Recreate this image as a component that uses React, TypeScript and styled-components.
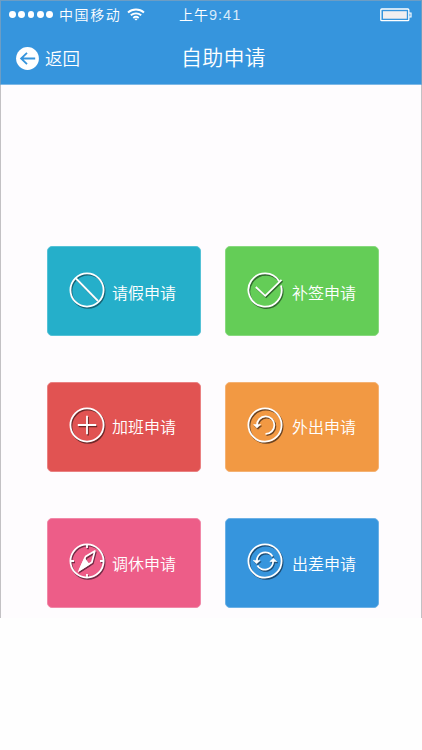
import React from 'react';
import styled, { createGlobalStyle } from 'styled-components';

const GlobalStyle = createGlobalStyle`
  * { box-sizing: border-box; }
  body {
    margin: 0;
    background: #fefefe;
    font-family: "Noto Sans CJK SC", sans-serif;
    font-weight: 350;
    color: #fff;
  }
`;

const Screen = styled.main`
  width: 422px;
  height: 618px;
  border: 1px solid #c3c1c4;
  border-top: 0;
  border-bottom: 0;
  background: #fefcfe;
`;

const Header = styled.header`
  height: 85px;
  margin: 0 -1px;
  background: #3695dd;
  border: 1px solid #6c9dc4;
  border-bottom-color: #7eb8e6;
`;

const StatusBar = styled.div`
  display: grid;
  grid-template-columns: 170px 1fr auto;
  align-items: center;
  height: 27px;
  padding: 0 9px 0 8px;
`;

const Carrier = styled.div`
  display: flex;
  align-items: center;
`;

const Dots = styled.div`
  display: flex;
  gap: 2.4px;
  margin-right: 6px;
`;

const Dot = styled.i`
  width: 6.9px;
  height: 6.9px;
  border-radius: 50%;
  background: #fff;
`;

const StatusText = styled.span<{ $spacing: number }>`
  margin-top: -1px;
  font-size: 14px;
  line-height: 20px;
  letter-spacing: ${(p) => p.$spacing}px;
  white-space: nowrap;
`;

const Digits = styled.span`
  font-family: "Liberation Sans", sans-serif;
  font-size: 14.5px;
  color: #d8ebfa;
`;

const Gap = styled.span`
  width: 6px;
`;

const NavBar = styled.div`
  display: grid;
  grid-template-columns: 165px 1fr;
  align-items: center;
  height: 56px;
  padding: 2px 0 0 15px;
`;

const BackButton = styled.button`
  display: flex;
  align-items: center;
  gap: 6px;
  padding: 2px 0 0;
  border: 0;
  background: none;
  color: inherit;
  font: inherit;
  font-size: 17.5px;
  line-height: 24px;
`;

const Title = styled.h1`
  margin: -2px 0 0;
  font-size: 21px;
  line-height: 30px;
  letter-spacing: 0.2px;
  font-weight: 350;
`;

const CardGrid = styled.div`
  display: grid;
  grid-template-columns: 154px 154px;
  grid-auto-rows: 90px;
  gap: 46px 24px;
  padding: 161px 0 0 46px;
`;

const Card = styled.button<{ $color: string; $edge: string; $top: number }>`
  display: flex;
  align-items: flex-start;
  padding: ${(p) => p.$top}px 0 0 19px;
  border: 1px solid ${(p) => p.$edge};
  border-radius: 5px;
  background: ${(p) => p.$color};
  color: #fff;
  font: inherit;
  text-align: left;
`;

const CardIcon = styled.svg`
  flex: none;
  width: 40px;
  height: 40px;
  fill: none;
  stroke-width: 1.8;
`;

const CardLabel = styled.span<{ $left: number; $top: number }>`
  margin: ${(p) => p.$top}px 0 0 ${(p) => p.$left}px;
  font-size: 16px;
  line-height: 24px;
  white-space: nowrap;
`;

type Kind = 'ban' | 'check' | 'plus' | 'undo' | 'compass' | 'sync';

const shapes: Record<Kind, React.ReactNode> = {
  ban: <path d="M9 8.5 31 31" />,
  check: <path d="m10.8 17 9.4 8.8L36.5 9.8" />,
  plus: <path d="M20 10.8v18.4M10.8 20h18.4" />,
  undo: (
    <>
      <path d="M12 20.5A8.7 8.7 0 1 1 20.5 28.8" />
      <path d="M8.6 19.6h7l-3.7 3.4Z" fill="currentColor" strokeWidth=".6" />
    </>
  ),
  compass: (
    <>
      <path d="M20 3v4M20 33v4M3 20h4M33 20h4" />
      <path d="M27.8 10 18.6 15.6 12.6 29 24.9 21.3Z" strokeWidth="1.7" strokeLinejoin="round" />
      <path d="M17.6 18 12.6 29 21.6 23.2Z" fill="currentColor" />
    </>
  ),
  sync: (
    <>
      <path d="M11.8 20A8.5 8.5 0 0 1 27.6 15.5M28.2 20A8.5 8.5 0 0 1 12.4 24.5" />
      <path d="M8.2 19.4h7l-3.6 3.3ZM31.8 20.6h-7l3.6-3.3Z" fill="currentColor" strokeWidth=".6" />
    </>
  ),
};

function EmbossedIcon({ kind, shade }: { kind: Kind; shade: string }) {
  const ring =
    kind === 'check' ? <path d="M34.2 11.4A16.6 16.6 0 1 0 36 15.5M34.2 11.4 32.2 8.8" /> : <circle cx="20" cy="20" r="16.6" />;
  return (
    <CardIcon viewBox="0 0 40 40">
      <g transform="translate(1 1.3)" stroke={shade} color={shade}>
        {ring}
        {shapes[kind]}
      </g>
      <g stroke="#fff" color="#fff">
        {ring}
        {shapes[kind]}
      </g>
    </CardIcon>
  );
}

interface Item {
  kind: Kind;
  label: string;
  color: string;
  edge: string;
  shade: string;
  iconTop: number;
  labelLeft: number;
  labelTop: number;
}

const items: Item[] = [
  { kind: 'ban', label: '请假申请', color: '#25afca', edge: '#55c2d6', shade: '#176274', iconTop: 23, labelLeft: 5, labelTop: 10 },
  { kind: 'check', label: '补签申请', color: '#64cd57', edge: '#88d97f', shade: '#336a30', iconTop: 23, labelLeft: 7, labelTop: 10 },
  { kind: 'plus', label: '加班申请', color: '#e15352', edge: '#ea8182', shade: '#6c2929', iconTop: 21.5, labelLeft: 5, labelTop: 9 },
  { kind: 'undo', label: '外出申请', color: '#f29943', edge: '#f5b273', shade: '#694323', iconTop: 21.5, labelLeft: 7, labelTop: 9 },
  { kind: 'compass', label: '调休申请', color: '#ed5d88', edge: '#f188a8', shade: '#712c46', iconTop: 21.5, labelLeft: 5, labelTop: 10 },
  { kind: 'sync', label: '出差申请', color: '#3695dd', edge: '#6cb1e6', shade: '#1d4b72', iconTop: 21.5, labelLeft: 7, labelTop: 10 },
];

function WifiIcon() {
  return (
    <svg width="18" height="13" viewBox="0 0 18 13" fill="none" stroke="#fff" strokeWidth="1.9">
      <path d="M1 4.5a12 12 0 0 1 16 0M3.8 7.3a8 8 0 0 1 10.4 0M6.3 9.9a4.2 4.2 0 0 1 5.4 0" />
      <path d="m7.5 11.2 1.5 1.4 1.5-1.4a2.2 2.2 0 0 0-3 0Z" fill="#fff" stroke="none" />
    </svg>
  );
}

function BatteryIcon() {
  return (
    <svg width="32" height="14" viewBox="0 0 32 14" fill="none" stroke="#fff">
      <rect x=".8" y="1" width="28" height="11.7" rx="1" strokeWidth="1.3" />
      <rect x="3" y="3.2" width="23.8" height="7.5" fill="#f1eff0" stroke="none" />
      <path d="M29 5h2v4h-2" strokeWidth="1.2" />
    </svg>
  );
}

function BackIcon() {
  return (
    <svg width="23" height="23" viewBox="0 0 23 23" fill="none">
      <circle cx="11.5" cy="11.5" r="11.4" fill="#fff" />
      <path d="M19.2 11.5H5.5M11 5.8l-5.9 5.7L11 17.2" stroke="#3695dd" strokeWidth="1.8" />
    </svg>
  );
}

export default function App() {
  return (
    <>
      <GlobalStyle />
      <Screen>
        <Header>
          <StatusBar>
            <Carrier>
              <Dots>
                {[0, 1, 2, 3, 4].map((n) => (
                  <Dot key={n} />
                ))}
              </Dots>
              <StatusText $spacing={1.6}>中国移动</StatusText>
              <Gap />
              <WifiIcon />
            </Carrier>
            <StatusText $spacing={1}>
              上午<Digits>9:41</Digits>
            </StatusText>
            <BatteryIcon />
          </StatusBar>
          <NavBar>
            <BackButton>
              <BackIcon />
              返回
            </BackButton>
            <Title>自助申请</Title>
          </NavBar>
        </Header>
        <CardGrid>
          {items.map((item) => (
            <Card key={item.kind} $color={item.color} $edge={item.edge} $top={item.iconTop}>
              <EmbossedIcon kind={item.kind} shade={item.shade} />
              <CardLabel $left={item.labelLeft} $top={item.labelTop}>
                {item.label}
              </CardLabel>
            </Card>
          ))}
        </CardGrid>
      </Screen>
    </>
  );
}
